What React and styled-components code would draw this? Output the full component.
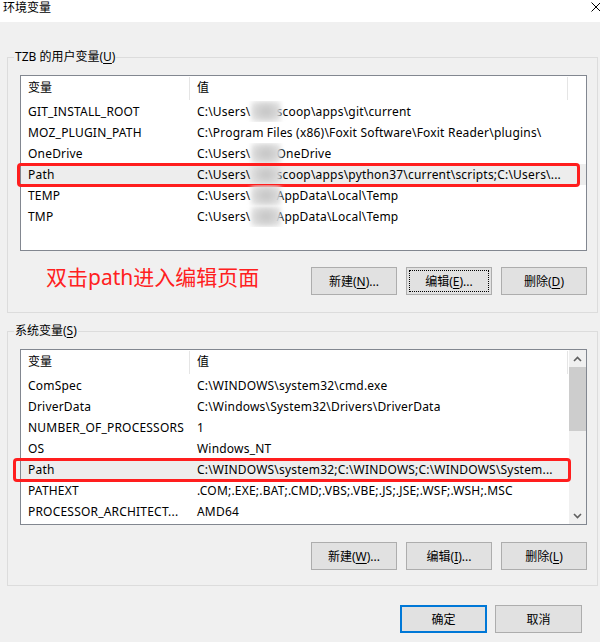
import React from "react";
import styled, { createGlobalStyle } from "styled-components";

const userVars = [
	{ name: "GIT_INSTALL_ROOT", pre: "C:\\Users\\", post: "scoop\\apps\\git\\current" },
	{ name: "MOZ_PLUGIN_PATH", value: "C:\\Program Files (x86)\\Foxit Software\\Foxit Reader\\plugins\\" },
	{ name: "OneDrive", pre: "C:\\Users\\", post: "OneDrive" },
	{
		name: "Path",
		pre: "C:\\Users\\",
		post: "scoop\\apps\\python37\\current\\scripts;C:\\Users\\...",
		mark: { left: -4, right: 6 },
	},
	{ name: "TEMP", pre: "C:\\Users\\", post: "AppData\\Local\\Temp" },
	{ name: "TMP", pre: "C:\\Users\\", post: "AppData\\Local\\Temp" },
];

const systemVars = [
	{ name: "ComSpec", value: "C:\\WINDOWS\\system32\\cmd.exe" },
	{ name: "DriverData", value: "C:\\Windows\\System32\\Drivers\\DriverData" },
	{ name: "NUMBER_OF_PROCESSORS", value: "1" },
	{ name: "OS", value: "Windows_NT" },
	{
		name: "Path",
		value: "C:\\WINDOWS\\system32;C:\\WINDOWS;C:\\WINDOWS\\System...",
		mark: { left: -8, right: -2 },
	},
	{ name: "PATHEXT", value: ".COM;.EXE;.BAT;.CMD;.VBS;.VBE;.JS;.JSE;.WSF;.WSH;.MSC" },
	{ name: "PROCESSOR_ARCHITECT...", value: "AMD64" },
];

const GlobalStyle = createGlobalStyle`
	html, body {
		margin: 0;
		padding: 0;
		background: #f0f0f0;
	}
	body {
		font-family: "Noto Sans", "Noto Sans CJK SC", sans-serif;
		font-size: 12px;
		color: #000;
	}
	u {
		text-decoration-thickness: 1px;
		text-underline-offset: 2px;
	}
`;

const Chevron = ({ down }) => (
	<svg width="9" height="6" viewBox="0 0 9 6">
		<polyline
			points={down ? "1,1 4.5,4.5 8,1" : "1,5 4.5,1.5 8,5"}
			fill="none"
			stroke="#606060"
			strokeWidth="1.6"
		/>
	</svg>
);

const VarRow = ({ row }) => (
	<Row $marked={!!row.mark}>
		<Cell $width={169}>{row.name}</Cell>
		<Cell $width={378}>
			{row.value ?? (
				<>
					{row.pre}
					<Smudge />
					{row.post}
				</>
			)}
		</Cell>
		{row.mark && <Mark $left={row.mark.left} $right={row.mark.right} />}
	</Row>
);

const VarList = ({ rows, scroll }) => (
	<ListView>
		<ListBody>
			<Header>
				<HeadCell $width={169}>变量</HeadCell>
				<HeadCell $width={378}>值</HeadCell>
			</Header>
			{rows.map((r) => (
				<VarRow key={r.name} row={r} />
			))}
		</ListBody>
		{scroll && (
			<ScrollBar>
				<ScrollArrow>
					<Chevron />
				</ScrollArrow>
				<Thumb />
				<ScrollArrow $bottom>
					<Chevron down />
				</ScrollArrow>
			</ScrollBar>
		)}
	</ListView>
);

const App = () => {
	return (
		<Window>
			<GlobalStyle />
			<TitleBar>
				<Title>环境变量</Title>
				<Close width="10" height="10" viewBox="0 0 10 10">
					<path d="M0.5 0.5 L9.5 9.5 M9.5 0.5 L0.5 9.5" stroke="#000" strokeWidth="1" />
				</Close>
			</TitleBar>

			<Group $top={35} $bottom={17}>
				<GroupLabel>
					TZB 的用户变量(<u>U</u>)
				</GroupLabel>
				<VarList rows={userVars} />
				<ButtonRow $gap={16}>
					<Hint>双击path进入编辑页面</Hint>
					<Button>
						新建(<u>N</u>)...
					</Button>
					<Button $focused>
						编辑(<u>E</u>)...
					</Button>
					<Button>
						删除(<u>D</u>)
					</Button>
				</ButtonRow>
			</Group>

			<Group $top={18} $bottom={15}>
				<GroupLabel>
					系统变量(<u>S</u>)
				</GroupLabel>
				<VarList rows={systemVars} scroll />
				<ButtonRow $gap={17}>
					<Button>
						新建(<u>W</u>)...
					</Button>
					<Button>
						编辑(<u>I</u>)...
					</Button>
					<Button>
						删除(<u>L</u>)
					</Button>
				</ButtonRow>
			</Group>

			<Footer>
				<Button $default>确定</Button>
				<Button>取消</Button>
			</Footer>
		</Window>
	);
};

export default App;

const Window = styled.div`
	width: 600px;
	height: 642px;
	overflow: hidden;
	background: #f0f0f0;
`;

const TitleBar = styled.div`
	display: flex;
	justify-content: space-between;
	height: 22px;
	background: #fff;
`;

const Title = styled.span`
	padding-left: 3px;
	line-height: 16px;
`;

const Close = styled.svg`
	margin-top: 2px;
	margin-right: -1px;
`;

const Group = styled.div`
	position: relative;
	box-sizing: border-box;
	width: 591px;
	margin: ${(p) => p.$top}px 0 0 7px;
	padding: 17px 10px ${(p) => p.$bottom}px 12px;
	border: 1px solid #dcdcdc;
`;

const GroupLabel = styled.span`
	position: absolute;
	top: -9px;
	left: 6px;
	padding: 0 1px;
	line-height: 16px;
	background: #f0f0f0;
`;

const ListView = styled.div`
	display: flex;
	box-sizing: border-box;
	height: 176px;
	border: 1px solid #828790;
	background: #fff;
`;

const ListBody = styled.div`
	flex: 1;
	min-width: 0;
`;

const Header = styled.div`
	display: flex;
	height: 25px;
`;

const HeadCell = styled.div`
	position: relative;
	box-sizing: border-box;
	width: ${(p) => p.$width}px;
	padding-left: 7px;
	line-height: 24px;

	&::after {
		content: "";
		position: absolute;
		right: 0;
		top: 1px;
		bottom: 1px;
		width: 1px;
		background: #e5e5e5;
	}
`;

const Row = styled.div`
	position: relative;
	display: flex;
	height: 21px;
	background: ${(p) => (p.$marked ? "#ededed" : "transparent")};
`;

const Cell = styled.div`
	box-sizing: border-box;
	width: ${(p) => p.$width}px;
	padding-left: 7px;
	line-height: 21px;
	letter-spacing: 0.2px;
	white-space: nowrap;
	overflow: hidden;
`;

const Smudge = styled.span`
	display: inline-block;
	vertical-align: top;
	width: 30px;
	height: 21px;
	margin-right: -4px;
	position: relative;
	background: radial-gradient(ellipse at center, #c4c4c4 0%, #d8d8d8 55%, rgba(235, 235, 235, 0.6) 100%);
	filter: blur(2px);
`;

const Mark = styled.div`
	position: absolute;
	top: -1px;
	bottom: -2px;
	left: ${(p) => p.$left}px;
	right: ${(p) => p.$right}px;
	border: 3px solid #ff1e1e;
	border-radius: 4px;
	pointer-events: none;
`;

const ScrollBar = styled.div`
	display: flex;
	flex-direction: column;
	width: 17px;
	background: #f0f0f0;
`;

const ScrollArrow = styled.div`
	display: flex;
	align-items: center;
	justify-content: center;
	height: 17px;
	margin-top: ${(p) => (p.$bottom ? "auto" : "0")};
`;

const Thumb = styled.div`
	height: 64px;
	background: #cdcdcd;
`;

const ButtonRow = styled.div`
	display: flex;
	justify-content: flex-end;
	align-items: center;
	gap: 9px;
	margin-top: ${(p) => p.$gap}px;
`;

const Hint = styled.span`
	margin: -8px auto 0 26px;
	font-size: 21px;
	line-height: 22px;
	color: #ff2020;
`;

const Button = styled.button`
	box-sizing: border-box;
	width: 86px;
	height: 28px;
	padding: 0;
	font: inherit;
	color: #000;
	background: #e1e1e1;
	border: ${(p) => (p.$default ? "2px solid #0078d7" : "1px solid #adadad")};
	outline: ${(p) => (p.$focused ? "1px dotted #000" : "none")};
	outline-offset: -4px;
`;

const Footer = styled.div`
	display: flex;
	justify-content: flex-end;
	gap: 8px;
	margin: 19px 18px 0 0;

	${Button} {
		width: 87px;
	}
`;
